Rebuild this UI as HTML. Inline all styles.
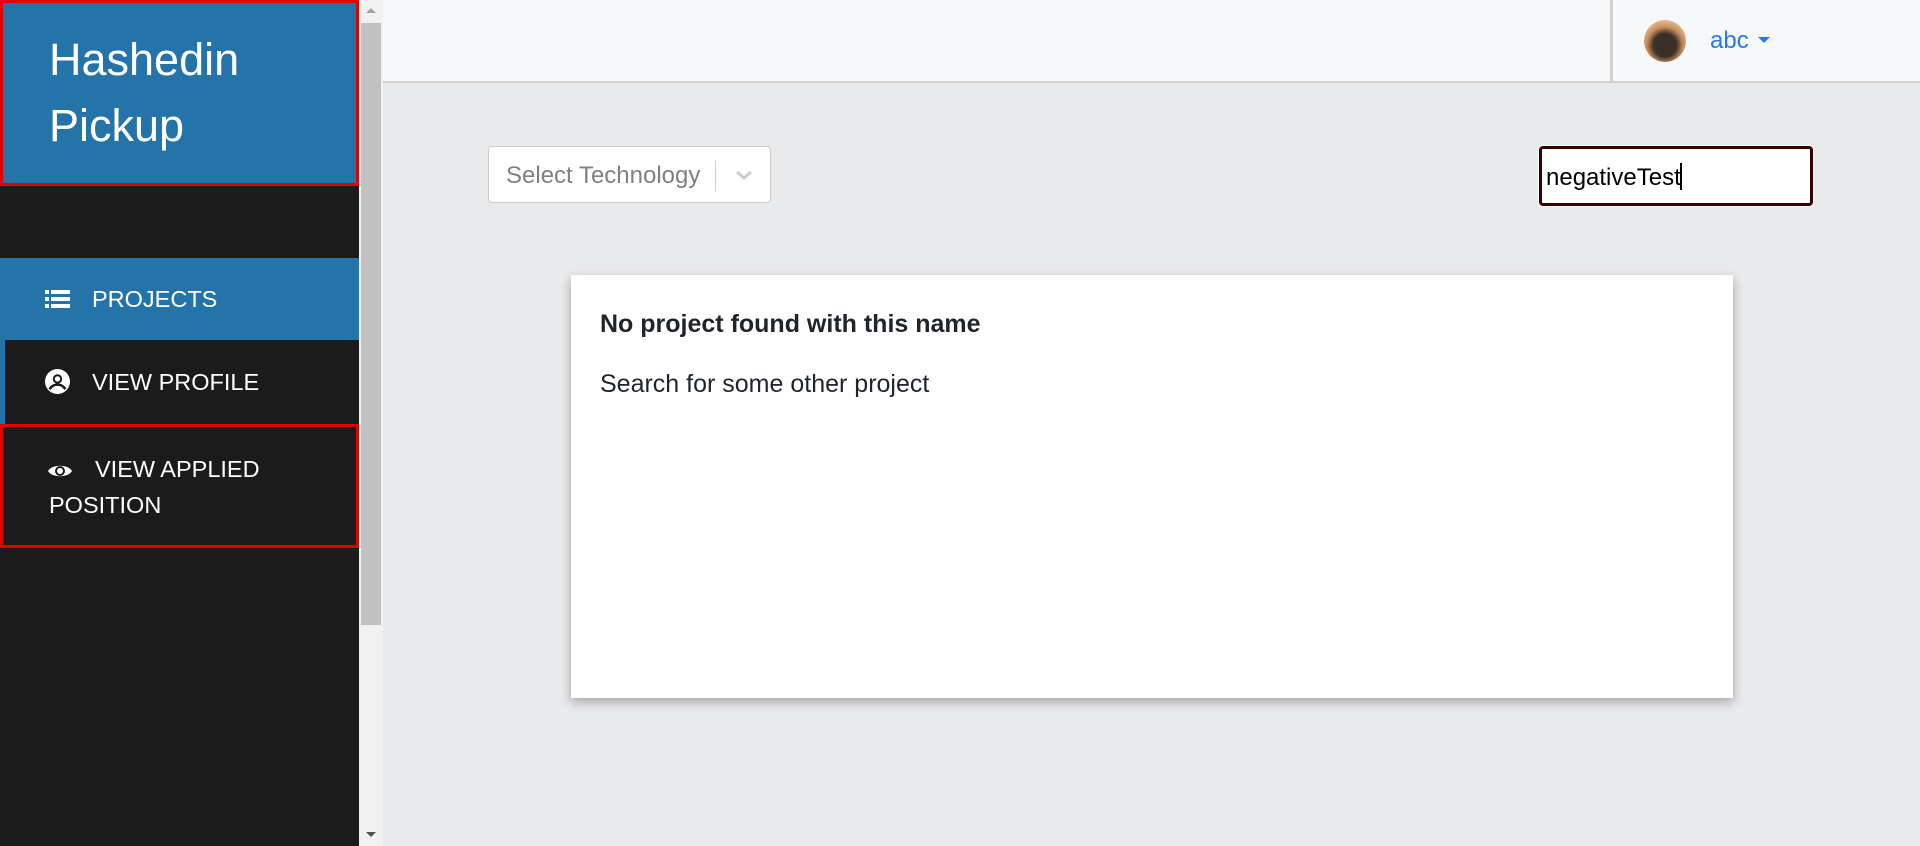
<!DOCTYPE html>
<html><head><meta charset="utf-8"><style>
*{box-sizing:border-box;margin:0;padding:0}
body{width:1920px;height:846px;overflow:hidden;background:#e9eaec;font-family:"Liberation Sans",Arial,sans-serif;position:relative}
.sb{position:absolute;left:0;top:0;width:359px;height:846px;background:#1b1b1b}
.hd{position:absolute;left:0;top:0;width:359px;height:186px;background:#2574a9;border:3px solid #e00000;color:#fff;font-size:45px;line-height:66px;padding:24px 0 0 46px}
.it{position:absolute;left:0;width:359px;color:#fff;font-size:23.5px}
.sc{position:absolute;left:359px;top:0;width:24px;height:846px;background:#f1f1f1}
.th{position:absolute;left:2px;top:23px;width:20px;height:602px;background:#c1c1c1}
.top{position:absolute;left:383px;top:0;width:1537px;height:83px;background:#f7f8fa;border-bottom:2px solid #d0d0d0}
</style></head><body>
<div class="sb">
<div class="hd">Hashedin<br>Pickup</div>
<div class="it" style="top:258px;height:82px;background:#2574a9">
<svg style="position:absolute;left:45px;top:32px" width="25" height="18" viewBox="0 0 25 18"><g fill="#fff"><rect x="0" y="0" width="4" height="4"/><rect x="6" y="0" width="19" height="4"/><rect x="0" y="7" width="4" height="4"/><rect x="6" y="7" width="19" height="4"/><rect x="0" y="14" width="4" height="4"/><rect x="6" y="14" width="19" height="4"/></g></svg>
<span style="position:absolute;left:92px;top:28px">PROJECTS</span></div>
<div class="it" style="top:340px;height:84px;border-left:5px solid #2574a9">
<svg style="position:absolute;left:40px;top:29px" width="25" height="25" viewBox="0 0 24 24"><circle cx="12" cy="12" r="12" fill="#fff"/><circle cx="12" cy="9.5" r="4.5" fill="#1b1b1b"/><circle cx="12" cy="9.5" r="2.6" fill="#fff"/><path d="M4.5 19.5c1.5-3 4-4.5 7.5-4.5s6 1.5 7.5 4.5" stroke="#1b1b1b" stroke-width="2.5" fill="none"/></svg>
<span style="position:absolute;left:87px;top:29px">VIEW PROFILE</span></div>
<div class="it" style="top:424px;height:124px;border:3px solid #e00000">
<svg style="position:absolute;left:44px;top:35px" width="26" height="18" viewBox="0 0 26 18"><path d="M1 9C5 2 21 2 25 9C21 16 5 16 1 9Z" fill="#fff"/><circle cx="13" cy="9" r="5" fill="#1b1b1b"/><circle cx="13" cy="9" r="3" fill="#fff"/></svg>
<span style="position:absolute;left:92px;top:29px">VIEW APPLIED</span>
<span style="position:absolute;left:46px;top:65px">POSITION</span></div>
</div>
<div class="sc"><div class="th"></div>
<div style="position:absolute;left:7px;top:8px;border:5px solid transparent;border-bottom:5px solid #a3a3a3;border-top:0"></div>
<div style="position:absolute;left:7px;top:832px;border:5px solid transparent;border-top:5px solid #505050;border-bottom:0"></div></div>
<div class="top">
<div style="position:absolute;left:1227px;top:0;width:3px;height:81px;background:#d0d0d0"></div>
<div style="position:absolute;left:1261px;top:20px;width:42px;height:42px;border-radius:50%;background:radial-gradient(circle at 50% 60%,#3a3028 0 35%,#c88a5a 55%,#e0b890 75%,#9a6a48)"></div>
<span style="position:absolute;left:1327px;top:27px;font-size:24px;color:#2a7ae2">abc</span>
<div style="position:absolute;left:1375px;top:37px;border:6px solid transparent;border-top:6px solid #2a7ae2;border-bottom:0"></div>
</div>
<div style="position:absolute;left:488px;top:146px;width:283px;height:57px;background:#fff;border:1px solid #ccc;border-radius:4px">
<span style="position:absolute;left:17px;top:15px;font-size:24px;color:#808080">Select Technology</span>
<div style="position:absolute;left:226px;top:14px;width:1px;height:30px;background:#ccc"></div>
<svg style="position:absolute;left:246px;top:22px" width="18" height="12" viewBox="0 0 18 12"><path d="M2 3l7 6 7-6" stroke="#ccc" stroke-width="3" fill="none"/></svg>
</div>
<div style="position:absolute;left:1539px;top:146px;width:274px;height:60px;background:#fff;border:3px solid #3a0000;border-radius:4px;box-shadow:0 0 0 1px #fff">
<span style="position:absolute;left:4px;top:15px;font-size:24px;color:#000">negativeTest</span>
<div style="position:absolute;left:138px;top:14px;width:2px;height:27px;background:#000"></div>
</div>
<div style="position:absolute;left:571px;top:275px;width:1162px;height:423px;background:#fff;box-shadow:0 4px 10px rgba(0,0,0,.3)">
<div style="position:absolute;left:29px;top:35px;font-size:25px;font-weight:bold;color:#212529">No project found with this name</div>
<div style="position:absolute;left:29px;top:95px;font-size:25px;color:#212529">Search for some other project</div>
</div>
</body></html>
